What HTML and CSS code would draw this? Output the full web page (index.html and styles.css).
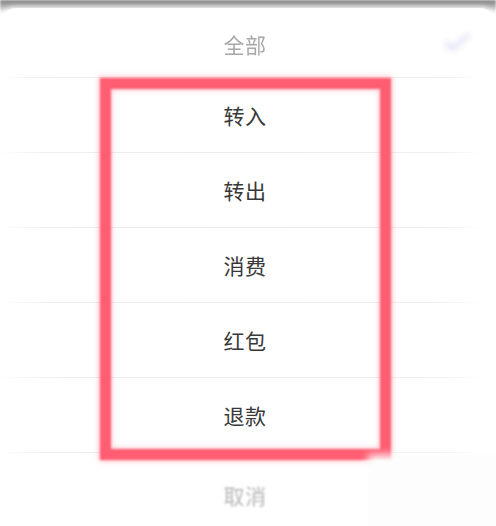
FILE: index.html
```html
<!DOCTYPE html>
<html lang="zh">
<head>
<meta charset="utf-8">
<link rel="stylesheet" href="styles.css">
</head>
<body>
<div class="screen">
  <div class="shade"></div>
  <div class="sheet">
    <div class="row row-first faded">
      <span class="label">全部</span>
      <svg class="check" width="30" height="24" viewBox="0 0 30 24"><path d="M4 13 L11 19 L26 5" fill="none" stroke="#c4c4f2" stroke-width="3" stroke-linecap="round" stroke-linejoin="round"/></svg>
    </div>
    <div class="row"><span class="label">转入</span></div>
    <div class="row"><span class="label">转出</span></div>
    <div class="row"><span class="label">消费</span></div>
    <div class="row"><span class="label">红包</span></div>
    <div class="row"><span class="label">退款</span></div>
    <div class="row row-last faded"><span class="label">取消</span></div>
  </div>
  <div class="highlight"></div>
  <div class="patch"></div>
</div>
</body>
</html>
```
FILE: styles.css
```css
html, body {
  margin: 0;
  padding: 0;
  background: #ffffff;
}
.screen {
  position: relative;
  width: 496px;
  height: 526px;
  overflow: hidden;
  background: #ffffff;
  font-family: "Noto Sans CJK SC", "Noto Sans", sans-serif;
}
.shade {
  height: 14px;
  margin-bottom: -6px;
  background: linear-gradient(#808080 0%, #a5a5a5 35%, #e4e4e4 75%, #ffffff 100%);
  filter: blur(1px);
}
.sheet {
  position: relative;
  display: flex;
  flex-direction: column;
  background: #ffffff;
  border-radius: 16px 16px 0 0;
  box-shadow: 0 -2px 4px rgba(255,255,255,0.6);
}
.row {
  position: relative;
  height: 75px;
  display: flex;
  align-items: center;
  justify-content: center;
  padding-right: 6px;
}
.row::after {
  content: "";
  position: absolute;
  left: 0;
  right: 0;
  bottom: 0;
  height: 1px;
  background: linear-gradient(90deg, rgba(236,236,236,0) 0%, #efefef 8%, #ebebeb 50%, #efefef 90%, rgba(236,236,236,0) 97%);
}
.row-first {
  height: 70px;
}
.row-last::after {
  display: none;
}
.label {
  font-size: 21px;
  color: #383838;
  line-height: 1;
  letter-spacing: 0.5px;
}
.faded .label {
  color: #a8a8a8;
  filter: blur(0.7px);
}
.row-last .label {
  margin-top: 9px;
  color: #b5b5b5;
  filter: blur(1px);
}
.row-first .label {
  margin-top: 2px;
}
.check {
  position: absolute;
  right: 24px;
  top: 22px;
  filter: blur(3px);
  opacity: 0.75;
}
.highlight {
  position: absolute;
  left: 100px;
  top: 78px;
  width: 269px;
  height: 360px;
  border: 11px solid #ff5d72;
  box-shadow: 0 0 5px 1px rgba(255, 120, 140, 0.55), inset 0 0 5px 1px rgba(255, 120, 140, 0.45);
  filter: blur(0.9px);
}
.patch {
  position: absolute;
  left: 368px;
  top: 455px;
  width: 140px;
  height: 80px;
  background: #fdfdfd;
  filter: blur(4px);
}
```
